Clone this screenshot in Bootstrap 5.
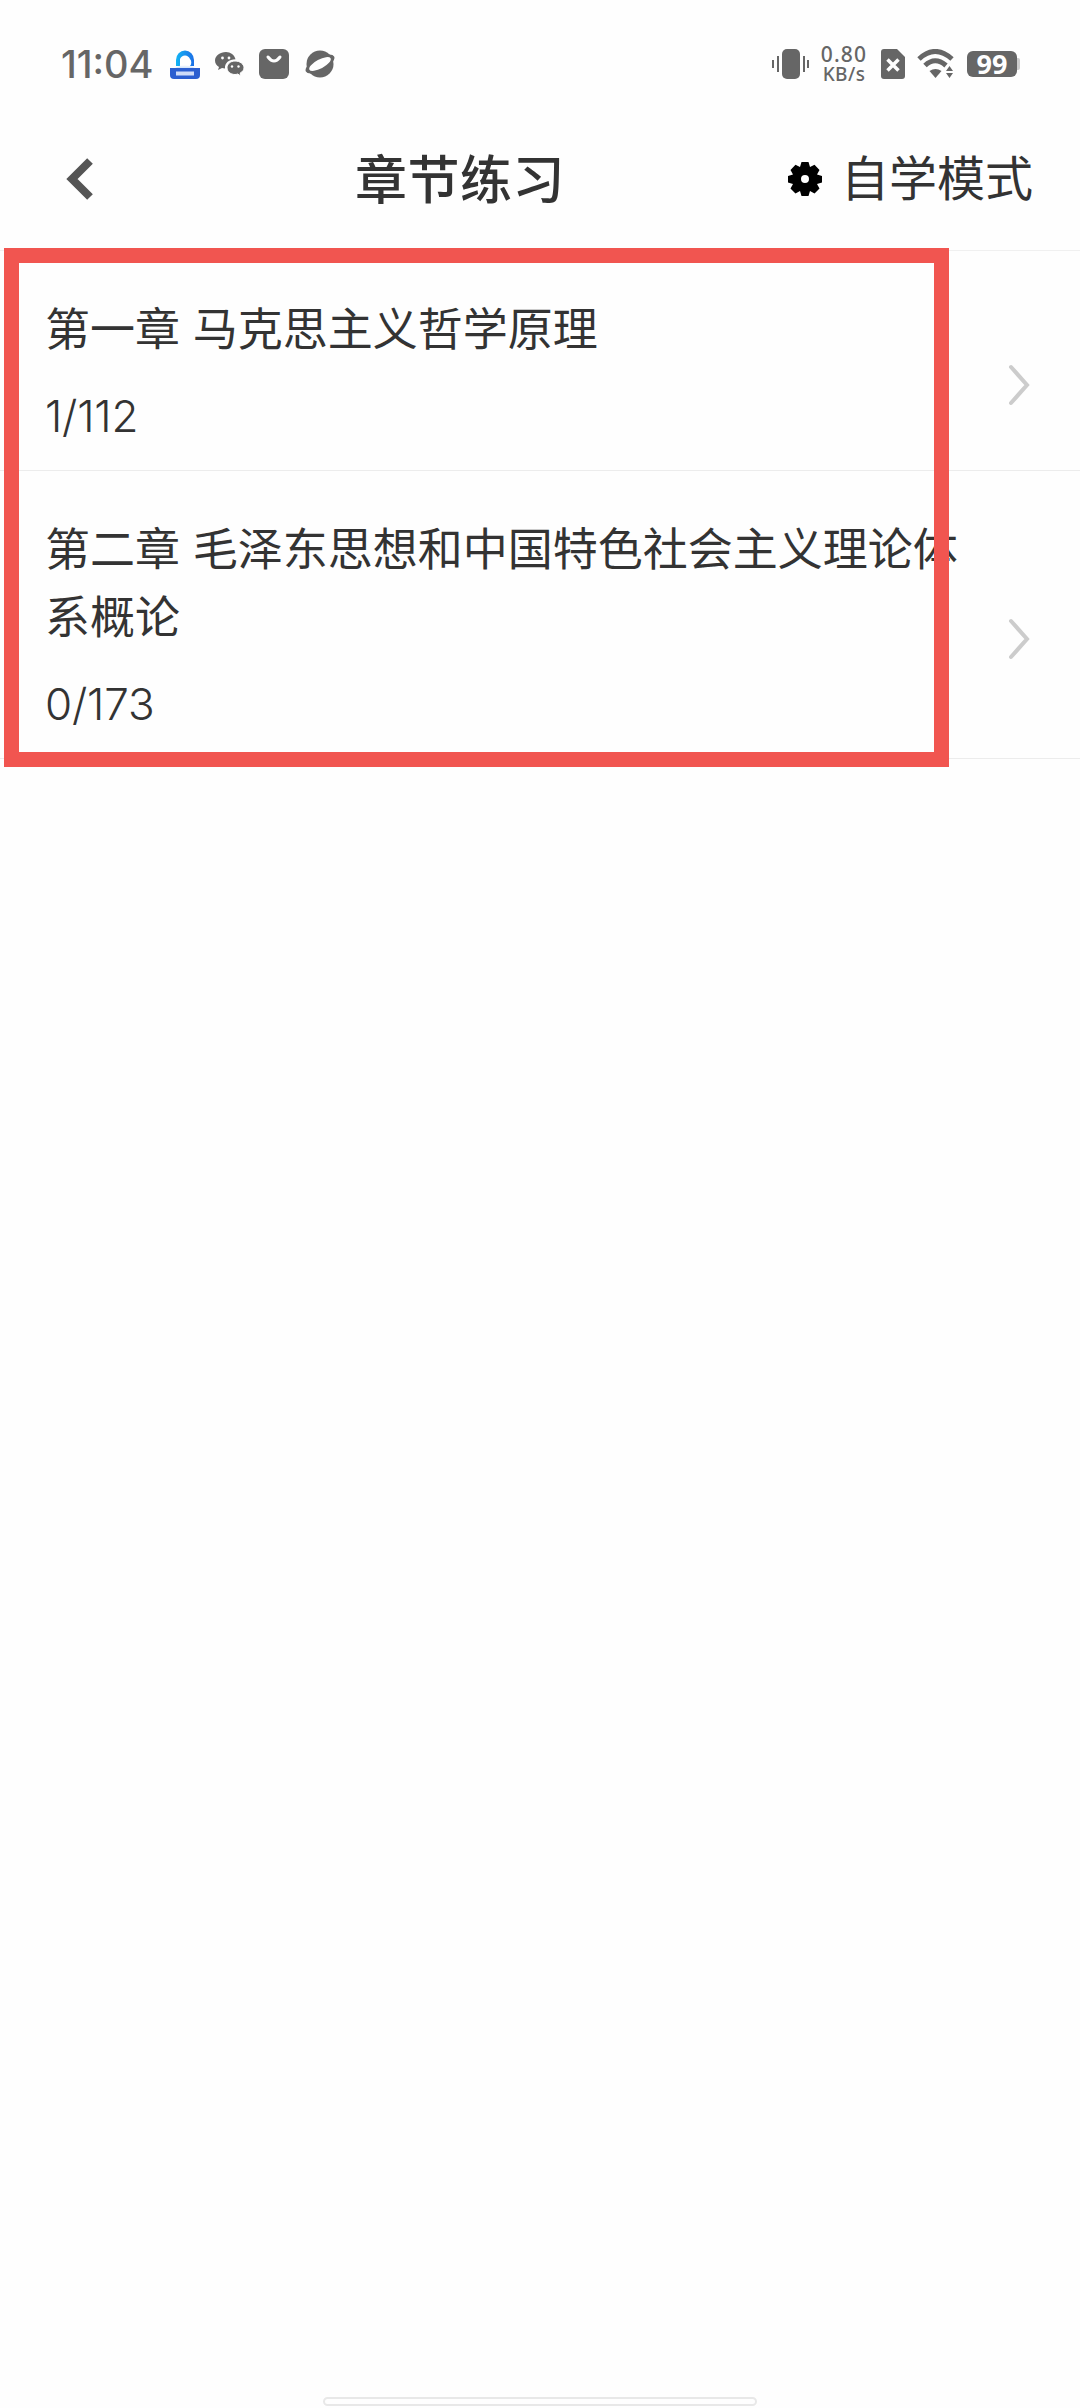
<!DOCTYPE html>
<html lang="zh-CN">
<head>
  <meta charset="UTF-8">
  <meta name="viewport" content="width=device-width, initial-scale=1">
  <title>章节练习</title>
  <link href="https://cdn.jsdelivr.net/npm/bootstrap@5.3.0/dist/css/bootstrap.min.css" rel="stylesheet">
  <style>
    body {
      width: 1080px;
      height: 2408px;
      overflow: hidden;
      background: #fefefe;
      font-family: "Inter", "Noto Sans CJK SC", sans-serif;
      color: #333;
    }
    .page-box { width: 1080px; height: 2408px; }

    .status-bar { height: 96px; padding: 32px 60px 0 61px; color: #666; }
    .status-time { font-size: 38px; font-weight: 500; line-height: 1; width: 96px; }
    .status-icons { gap: 15px; margin-left: 13px; }
    .status-right { margin-left: auto; }
    .status-gap { margin-right: 12px; }
    .speed-box { width: 50px; margin: 0 12px 0 10px; text-align: center; line-height: 1; font-family: "Noto Sans", sans-serif; font-weight: 500; }
    .speed-num { font-size: 21px; letter-spacing: 1.2px; }
    .speed-unit { font-size: 19px; letter-spacing: .4px; }
    .battery-box { width: 50px; height: 26px; background: #666; border-radius: 6px; color: #fff; font-size: 27px; font-weight: 700; line-height: 26px; text-align: center; font-family: "Noto Sans", sans-serif; }
    .battery-tip { width: 3px; height: 12px; background: #ccc; border-radius: 0 2px 2px 0; }

    .top-nav { height: 155px; padding: 12px 47px 0 66px; border-bottom: 1px solid #f0f0f0; position: relative; }
    .nav-title { position: absolute; left: 355px; top: 50px; margin: 0; font-size: 52px; line-height: 70px; font-weight: 500; letter-spacing: .5px; color: #333; }
    .nav-mode { margin-left: auto; gap: 19px; font-size: 48px; line-height: 60px; font-weight: 400; }

    .chapter-row { border-bottom: 1px solid #ececec; padding: 45px 50px 29px 45px; }
    .chapter-text { width: 925px; flex: none; }
    .chapter-name { font-size: 45px; line-height: 68px; margin: 0; }
    .chapter-count { font-size: 44px; font-weight: 300; line-height: 50px; margin-top: 27px; letter-spacing: -.2px; }
    .chapter-arrow { margin-left: auto; margin-top: 32px; flex: none; }

    .mark-box { position: absolute; left: 4px; top: 248px; width: 945px; height: 519px; border: 15px solid #f15550; pointer-events: none; }
    .home-bar { position: absolute; left: 323px; top: 2397px; width: 434px; height: 9px; border: 2px solid #e8e8e8; border-radius: 5px; background: #fefefe; }
  </style>
</head>
<body>
  <div class="page-box position-relative">
    <div class="status-bar d-flex align-items-center">
      <span class="status-time">11:04</span>
      <div class="status-icons d-flex align-items-center">
        <svg width="30" height="30" viewBox="0 0 30 30">
          <defs>
            <linearGradient id="arcBlue" x1="0" y1="0" x2="1" y2="0">
              <stop offset="0" stop-color="#12b4f4"/><stop offset="1" stop-color="#1c6fe6"/>
            </linearGradient>
            <linearGradient id="cloudFade" x1="0" y1="0" x2="0" y2="1">
              <stop offset="0" stop-color="#fefefe"/><stop offset="1" stop-color="#cfe2fa"/>
            </linearGradient>
          </defs>
          <path d="M6 17 V11 A9 9.500 0 0 1 24 11 V17 H20 A4.500 5 0 0 0 20 10 A5.500 6 0 0 0 10 10 V17 Z" fill="url(#arcBlue)"/>
          <path d="M5 19 Q15 13 25 19 Z" fill="url(#cloudFade)"/>
          <path d="M0 19 H30 V26 Q30 30 26 30 H4 Q0 30 0 26 Z" fill="#2c5fd0"/>
          <rect x="6" y="22.500" width="18" height="4" fill="#cfdcf8"/>
        </svg>
        <svg width="29" height="26" viewBox="0 0 29 26" fill="#666">
          <path d="M11 1 C5 1 0 4.800 0 9.500 C0 12.200 1.500 14.500 4 16 L3 19 L7 17 C8 17.300 9 17.500 10 17.500 C9.500 12 14 8.500 20.500 8.300 C19.500 4 15.500 1 11 1 Z"/>
          <path d="M20 10 C15.500 10 12 13 12 16.800 C12 20.500 15.500 23.500 20 23.500 C21 23.500 21.800 23.300 22.600 23 L26 25 L25.200 22 C27.500 20.800 29 19 29 16.800 C29 13 25 10 20 10 Z" stroke="#fefefe" stroke-width="1"/>
          <circle cx="7.500" cy="7" r="1.400" fill="#fefefe"/><circle cx="14" cy="7" r="1.400" fill="#fefefe"/>
          <circle cx="17" cy="15.500" r="1.200" fill="#fefefe"/><circle cx="23.500" cy="15.500" r="1.200" fill="#fefefe"/>
        </svg>
        <svg width="30" height="30" viewBox="0 0 30 30">
          <rect width="30" height="30" rx="6" fill="#666"/>
          <path d="M9 8 Q15 16 21 8" fill="none" stroke="#fefefe" stroke-width="3" stroke-linecap="round"/>
        </svg>
        <svg width="32" height="28" viewBox="0 0 32 28">
          <circle cx="16" cy="14" r="13.500" fill="#666"/>
          <ellipse cx="16" cy="14" rx="16" ry="6.500" transform="rotate(-28 16 14)" fill="#666"/>
          <ellipse cx="16" cy="14" rx="12" ry="4.500" transform="rotate(-28 16 14)" fill="#fefefe"/>
        </svg>
      </div>
      <div class="status-right d-flex align-items-center">
        <svg width="37" height="30" viewBox="0 0 37 30" fill="#666">
          <rect x="10" y="0" width="18" height="30" rx="5"/>
          <rect x="0" y="11" width="2" height="8"/><rect x="5" y="7" width="2" height="16"/>
          <rect x="31" y="7" width="2" height="16"/><rect x="35" y="11" width="2" height="8"/>
        </svg>
        <div class="speed-box">
          <div class="speed-num">0.80</div>
          <div class="speed-unit">KB/s</div>
        </div>
        <svg class="status-gap" width="24" height="30" viewBox="0 0 24 30">
          <path d="M3 0 H16 L24 8 V27 Q24 30 21 30 H3 Q0 30 0 27 V3 Q0 0 3 0 Z" fill="#666"/>
          <path d="M6.500 10.500 L17.500 21.500 M17.500 10.500 L6.500 21.500" stroke="#fefefe" stroke-width="3.500"/>
        </svg>
        <svg class="status-gap" width="38" height="30" viewBox="0 0 38 30">
          <path d="M2 10 Q18 -5 35 10" fill="none" stroke="#666" stroke-width="5"/>
          <path d="M8 16.500 Q18 7 29 16.500" fill="none" stroke="#666" stroke-width="5"/>
          <path d="M12.500 22 L18.500 29 L24.500 22 Q18.500 18 12.500 22 Z" fill="#666"/>
          <path d="M32.500 17 L36 22 H29 Z M29 24 H36 L32.500 29 Z" fill="#666"/>
        </svg>
        <div class="battery-box">99</div>
        <div class="battery-tip"></div>
      </div>
    </div>

    <div class="top-nav d-flex align-items-center">
      <svg width="28" height="44" viewBox="0 0 28 44">
        <path d="M24 4 L6 22 L24 40" fill="none" stroke="#555" stroke-width="8"/>
      </svg>
      <h1 class="nav-title">章节练习</h1>
      <div class="nav-mode d-flex align-items-center">
        <svg width="34" height="34" viewBox="0 0 34 34">
          <path fill="#000" fill-rule="evenodd" d="M13.500 0 H20.500 L22 5 L26.500 2.800 L31.500 8 L29 12.500 L34 14 V20.500 L29 22 L31.500 26.500 L26.500 31.500 L22 29 L20.500 34 H13.500 L12 29 L7.500 31.500 L2.500 26.500 L5 22 L0 20.500 V14 L5 12.500 L2.500 8 L7.500 2.800 L12 5 Z M17 13 A4 4 0 1 0 17 21 A4 4 0 1 0 17 13 Z"/>
        </svg>
        <span>自学模式</span>
      </div>
    </div>

    <div class="chapter-row d-flex align-items-center">
      <div class="chapter-text">
        <p class="chapter-name">第一章 马克思主义哲学原理</p>
        <div class="chapter-count">1/112</div>
      </div>
      <svg class="chapter-arrow" width="22" height="42" viewBox="0 0 22 42">
        <path d="M3 3 L19 21 L3 39" fill="none" stroke="#ccc" stroke-width="4" stroke-linecap="round"/>
      </svg>
    </div>
    <div class="chapter-row d-flex align-items-center">
      <div class="chapter-text">
        <p class="chapter-name">第二章 毛泽东思想和中国特色社会主义理论体系概论</p>
        <div class="chapter-count">0/173</div>
      </div>
      <svg class="chapter-arrow" width="22" height="42" viewBox="0 0 22 42">
        <path d="M3 3 L19 21 L3 39" fill="none" stroke="#ccc" stroke-width="4" stroke-linecap="round"/>
      </svg>
    </div>

    <div class="mark-box"></div>
    <div class="home-bar"></div>
  </div>
  <script src="https://cdn.jsdelivr.net/npm/bootstrap@5.3.0/dist/js/bootstrap.bundle.min.js"></script>
</body>
</html>
